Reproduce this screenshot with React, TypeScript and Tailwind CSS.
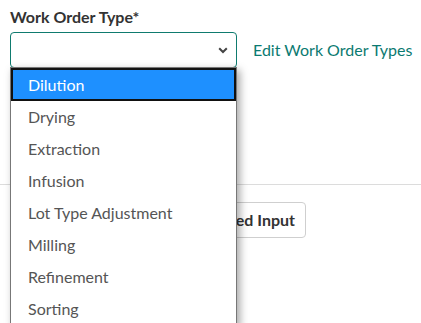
import React from "react";

const items = [
  "Dilution",
  "Drying",
  "Extraction",
  "Infusion",
  "Lot Type Adjustment",
  "Milling",
  "Refinement",
  "Sorting",
];

export default function App() {
  return (
    <div
      className="relative w-[421px] h-[323px] overflow-hidden bg-white"
      style={{ fontFamily: "Lato, 'Open Sans', sans-serif" }}
    >
      <div className="pl-[10px] pt-[6px]">
        <div className="text-[16px] font-bold text-[#333] leading-[22px]">Work Order Type*</div>
        <div className="mt-[4px] flex items-center">
          <div className="w-[227px] h-[36px] rounded-[4px] border border-[#0f7b6f] flex items-center justify-end pr-[8px]">
            <svg width="10" height="7" viewBox="0 0 10 7" fill="none">
              <path d="M1.2 1.2 L5 5 L8.8 1.2" stroke="#444" strokeWidth="2" />
            </svg>
          </div>
          <a className="ml-[16px] text-[16px] text-[#0b7a71] leading-[20px]">Edit Work Order Types</a>
        </div>
      </div>
      <div className="mt-[116px] border-t border-[#dcdcdc]" />
      <div className="w-[306px] flex justify-end mt-[17px]">
        <button className="h-[36px] px-[10px] rounded-[4px] border border-[#cfcfcf] bg-white text-[16px] font-bold text-[#333]">
          Add Unplanned Input
        </button>
      </div>

      <div className="absolute left-[10px] top-[67px] w-[227px] bg-white border border-[#777] shadow-[3px_3px_8px_rgba(0,0,0,0.35)]">
        {items.map((it, i) => (
          <div
            key={it}
            className={
              i === 0
                ? "h-[33px] flex items-center pl-[15px] bg-[#1e90ff] text-white border-2 border-[#111] text-[16px]"
                : "h-[32px] flex items-center pl-[17px] text-[#555] text-[16px]"
            }
          >
            {it}
          </div>
        ))}
      </div>
    </div>
  );
}
